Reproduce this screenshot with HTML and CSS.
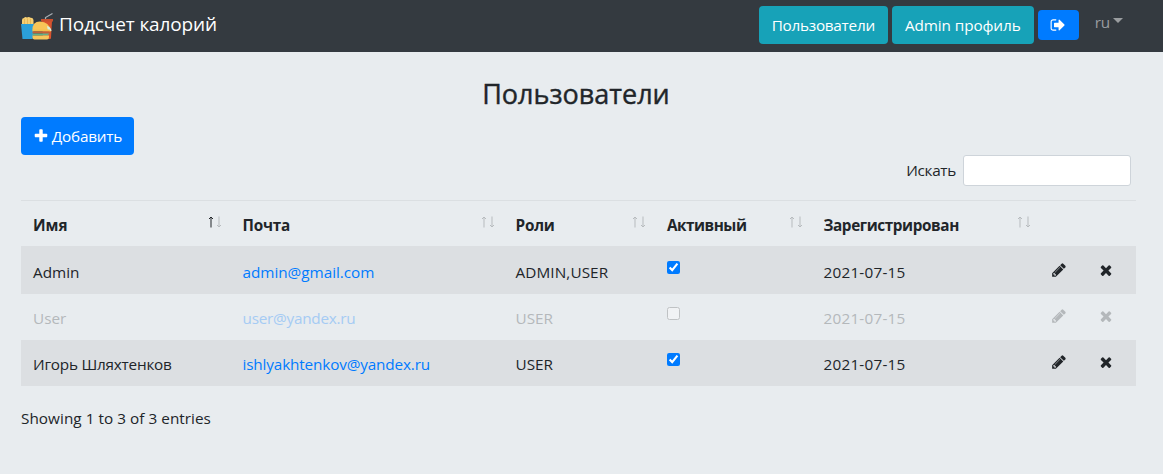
FILE: index.html
```html
<!DOCTYPE html>
<html lang="ru">
<head>
<meta charset="utf-8">
<title>Подсчет калорий</title>
<link rel="stylesheet" href="styles.css">
</head>
<body>
<svg class="sprite" aria-hidden="true">
  <symbol id="i-out" viewBox="0 0 1792 1792"><path d="M704 1440q0 4 1 20t.5 26.500-3 23.500-10 19.500-20.500 6.500h-320q-119 0-203.500-84.500t-84.500-203.500v-704q0-119 84.500-203.500t203.500-84.500h320q13 0 22.500 9.500t9.500 22.500q0 4 1 20t.5 26.500-3 23.500-10 19.500-20.500 6.500h-320q-66 0-113 47t-47 113v704q0 66 47 113t113 47h312l11.500 1 11.500 3 8 5.500 7 9 2 13.500zm928-544q0 26-19 45l-544 544q-19 19-45 19t-45-19-19-45v-288h-448q-26 0-45-19t-19-45v-384q0-26 19-45t45-19h448v-288q0-26 19-45t45-19 45 19l544 544q19 19 19 45z"/></symbol>
  <symbol id="i-pencil" viewBox="0 0 1792 1792"><path d="M491 1536l91-91-235-235-91 91v107h128v128h107zm523-928q0-22-22-22-10 0-17 7l-542 542q-7 7-7 17 0 22 22 22 10 0 17-7l542-542q7-7 7-17zm-54-192l416 416-832 832h-416v-416zm683 96q0 53-37 90l-166 166-416-416 166-165q36-38 90-38 53 0 91 38l235 234q37 39 37 91z"/></symbol>
  <symbol id="i-remove" viewBox="0 0 1792 1792"><path d="M1490 1322q0 40-28 68l-136 136q-28 28-68 28t-68-28l-294-294-294 294q-28 28-68 28t-68-28l-136-136q-28-28-28-68t28-68l294-294-294-294q-28-28-28-68t28-68l136-136q28-28 68-28t68 28l294 294 294-294q28-28 68-28t68 28l136 136q28 28 28 68t-28 68l-294 294 294 294q28 28 28 68z"/></symbol>
  <symbol id="i-plus" viewBox="0 0 1792 1792"><path d="M1600 736v192q0 40-28 68t-68 28h-416v416q0 40-28 68t-68 28h-192q-40 0-68-28t-28-68v-416h-416q-40 0-68-28t-28-68v-192q0-40 28-68t68-28h416v-416q0-40 28-68t68-28h192q40 0 68 28t28 68v416h416q40 0 68 28t28 68z"/></symbol>
  <symbol id="i-sort" viewBox="0 0 14 12"><path class="up" d="M3 11.500V1M1 3l2-2 2 2"/><path class="down" d="M11 .5V11M9 9l2 2 2-2"/></symbol>
</svg>

<nav class="navbar">
  <a class="brand">
    <svg class="logo" width="32" height="27" viewBox="0 0 32 27">
      <path d="M24.500 7V4.500L31.500.5" fill="none" stroke="#a9b0b5" stroke-width="1.200"/>
      <path d="M21 8h10l-1 17q0 1-1 1h-7z" fill="#d9532f"/>
      <path d="M20 6h12v2.500H20z" fill="#c8502f"/>
      <path d="M1 12V7q0-2 2-2 1-1.500 3-.5 2-1 3.500.3Q12 4.500 12.500 7v5z" fill="#f6cf73"/>
      <path d="M3.500 6v5M6.500 5.500V11M9.500 6v5" stroke="#e3ad4a" stroke-width=".7"/>
      <path d="M0 11h13l-1.300 15H1.500z" fill="#2b9fd9"/>
      <path d="M11.500 17.500q-.5-9 7.500-9 9 .5 11 9z" fill="#f8c558"/>
      <path d="M26 13q4 1 4.500 5H27z" fill="#d6f0e2"/>
      <path d="M11.500 16.500h17l1.500 2H11.500z" fill="#f3c14f"/>
      <path d="M11.500 18.500h17v2h-17z" fill="#c0603a"/>
      <path d="M11.500 20.500h17l-2 2h-15z" fill="#63b28a"/>
      <path d="M11.500 22.500h16.500v1.500q0 2.500-2 2.500H13.500q-2 0-2-2z" fill="#f6c65c"/>
    </svg>
    <span class="t-brand">Подсчет калорий</span>
  </a>
  <div class="actions">
    <a class="btn info b1"><span class="t-users">Пользователи</span></a>
    <a class="btn info b2"><span class="t-prof">Admin профиль</span></a>
    <button class="btn primary logout"><svg class="icon"><use href="#i-out"/></svg></button>
    <a class="lang">ru<span class="caret"></span></a>
  </div>
</nav>

<main class="content">
  <h3 class="title"><span class="t-title">Пользователи</span></h3>
  <button class="btn primary add"><svg class="icon"><use href="#i-plus"/></svg><span class="t-add">Добавить</span></button>
  <label class="filter"><span class="t-search">Искать</span><input class="search" type="text"></label>
  <table class="grid">
    <colgroup><col class="c1"><col class="c2"><col class="c3"><col class="c4"><col class="c5"><col class="c6"><col class="c7"></colgroup>
    <thead>
      <tr>
        <th><div class="head"><span class="h1">Имя</span><svg class="sort asc"><use href="#i-sort"/></svg></div></th>
        <th><div class="head"><span class="h2">Почта</span><svg class="sort"><use href="#i-sort"/></svg></div></th>
        <th><div class="head"><span class="h3">Роли</span><svg class="sort"><use href="#i-sort"/></svg></div></th>
        <th><div class="head"><span class="h4">Активный</span><svg class="sort"><use href="#i-sort"/></svg></div></th>
        <th><div class="head"><span class="h5">Зарегистрирован</span><svg class="sort"><use href="#i-sort"/></svg></div></th>
        <th></th><th></th>
      </tr>
    </thead>
    <tbody>
      <tr class="row odd first">
        <td><span class="n1">Admin</span></td><td><a class="m1">admin@gmail.com</a></td><td><span class="r1">ADMIN,USER</span></td>
        <td><input class="check" type="checkbox" checked></td><td><span class="date">2021-07-15</span></td>
        <td class="act"><svg class="icon"><use href="#i-pencil"/></svg></td><td class="act"><svg class="icon"><use href="#i-remove"/></svg></td>
      </tr>
      <tr class="row off">
        <td><span class="n2">User</span></td><td><a class="m2">user@yandex.ru</a></td><td><span class="r2">USER</span></td>
        <td><input class="check" type="checkbox"></td><td><span class="date">2021-07-15</span></td>
        <td class="act"><svg class="icon"><use href="#i-pencil"/></svg></td><td class="act"><svg class="icon"><use href="#i-remove"/></svg></td>
      </tr>
      <tr class="row odd">
        <td><span class="n3">Игорь Шляхтенков</span></td><td><a class="m3">ishlyakhtenkov@yandex.ru</a></td><td><span class="r2">USER</span></td>
        <td><input class="check" type="checkbox" checked></td><td><span class="date">2021-07-15</span></td>
        <td class="act"><svg class="icon"><use href="#i-pencil"/></svg></td><td class="act"><svg class="icon"><use href="#i-remove"/></svg></td>
      </tr>
    </tbody>
  </table>
  <div class="summary"><span class="t-sum">Showing 1 to 3 of 3 entries</span></div>
</main>
</body>
</html>
```
FILE: styles.css
```css
* { box-sizing: border-box; }
body {
  margin: 0;
  height: 474px;
  overflow: hidden;
  background: #e8ecef;
  color: #212529;
  font: 15.3px/24px "Open Sans", "Noto Sans", sans-serif;
}
.sprite { display: none; }
.icon { width: 16px; height: 16px; fill: currentColor; display: block; flex: none; }
span, a { white-space: nowrap; }

.navbar {
  height: 52px;
  padding: 6px 40px 0 21px;
  background: #343a40;
  display: flex;
  justify-content: space-between;
  align-items: flex-start;
}
.brand { display: flex; gap: 6px; color: #fff; font-size: 19px; line-height: 36px; }
.logo { margin-top: 7px; display: block; }
.actions { display: flex; gap: 4px; align-items: flex-start; }
.btn {
  display: flex;
  align-items: center;
  justify-content: center;
  height: 38px;
  padding: 0;
  border: 0;
  border-radius: 4px;
  color: #fff;
  font: inherit;
}
.info { background: #17a2b8; }
.primary { background: #007bff; }
.b1 { width: 129px; }
.b2 { width: 142px; }
.logout { width: 41px; height: 30px; margin-top: 4px; }
.lang {
  display: flex;
  align-items: center;
  gap: 3px;
  margin: 4px 0 0 12px;
  color: #9a9da0;
  letter-spacing: -0.2px;
}
.caret { border: 5px solid transparent; border-top-color: currentColor; border-bottom: 0; margin-top: -3px; }

.content { padding: 25px 27px 0 21px; }
.title { margin: 0; height: 40px; text-align: center; font-size: 27px; line-height: 34px; font-weight: 500; padding-right: 5px; -webkit-text-stroke: 0.4px currentColor; }
.add { width: 113px; gap: 3px; }
.filter { display: flex; justify-content: flex-end; align-items: center; gap: 7px; padding-right: 5px; height: 31px; }
.search { width: 168px; height: 31px; border: 1px solid #ced4da; border-radius: 3px; background: #fff; padding: 0 8px; }

.t-brand { letter-spacing: -0.12px; }
.t-users { letter-spacing: -0.25px; }
.t-prof { letter-spacing: -0.1px; }
.t-add { letter-spacing: -0.2px; }
.t-search { letter-spacing: -0.3px; line-height: 22px; margin-top: -2px; }
.h2 { letter-spacing: -0.2px; }
.h3 { letter-spacing: -0.2px; }
.h4 { letter-spacing: -0.48px; }
.h5 { letter-spacing: -0.4px; }
.m1 { letter-spacing: -0.03px; }
.m2 { letter-spacing: -0.25px; }
.m3 { letter-spacing: -0.15px; }
.n3 { letter-spacing: -0.22px; }
.r1 { letter-spacing: 0.1px; }
.date { letter-spacing: 0.22px; }
.t-sum { letter-spacing: 0.04px; }

.grid { margin-top: 14px; width: 1115px; table-layout: fixed; border-collapse: collapse; }
.c1 { width: 209.500px; }
.c2 { width: 273px; }
.c3 { width: 151.500px; }
.c4 { width: 156.500px; }
.c5 { width: 228.500px; }
.c6 { width: 47.500px; }
.c7 { width: 48.500px; }
th { height: 45px; padding: 0 9px 0 12px; text-align: left; border-top: 1px solid #dbdfe2; }
.head { display: flex; justify-content: space-between; align-items: center; padding-top: 3px; }
.sort { width: 14px; height: 12px; margin-top: -5px; stroke: #b7bbbe; fill: none; display: block; }
.asc { --up: #212529; }
.up { stroke: var(--up, #b7bbbe); }
td { height: 46px; padding: 2px 12px 0; vertical-align: middle; }
.first td { height: 48px; padding-top: 4px; }
.odd { background: #dcdfe2; }
.row a { color: #007bff; }
.off span, .off .icon { color: #b4b8bb; }
.off a { color: #a5cbf4; }
.off .check { opacity: .35; }
.check { display: block; width: 13px; height: 13px; margin: -8px 0 0; accent-color: #007bff; }
.act { padding-left: 10.500px; padding-right: 0; }
.act .icon { margin-top: -4px; }
.summary { margin-top: 20px; }
```
